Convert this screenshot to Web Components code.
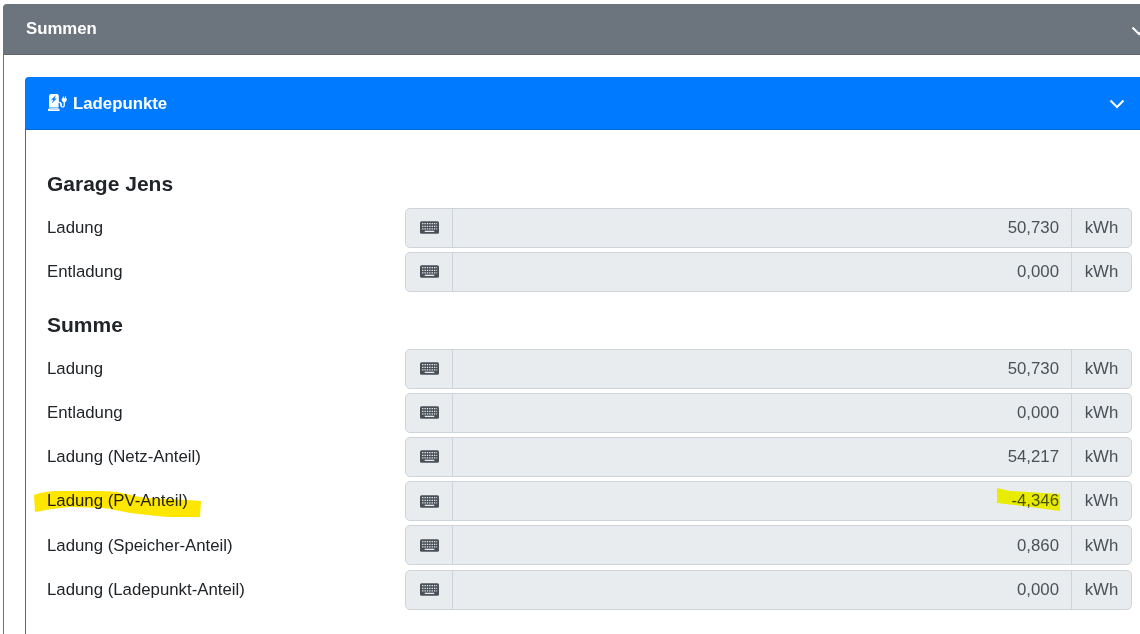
<!DOCTYPE html>
<html lang="de">
<head>
<meta charset="utf-8">
<title>Summen</title>
<style>
  html, body { margin: 0; height: 634px; overflow: hidden; background: #fff; }
  body { font: 16.8px/25.2px "Liberation Sans", Arial, sans-serif; color: #212529; position: relative; }
  .page { box-sizing: border-box; height: 634px; overflow: hidden; padding: 4px 0 0 3px; width: 1140px; }
  .outer { width: 1173px; }
  .first { --heading-top: 20px; }
</style>
</head>
<body>
<div class="page">
  <collapse-card class="outer" title="Summen" color="#6c757d" head="51" top="22" arrow-top="3">
    <collapse-card title="Ladepunkte" color="#007bff" head="53" top="21">
      <svg slot="icon" width="19" height="17" viewBox="0 0 576 512">
        <path fill="#fff" d="M40 400h272v60H40zM336 448H16c-8.800 0-16 7.200-16 16v32c0 8.800 7.200 16 16 16h320c8.800 0 16-7.200 16-16v-32c0-8.800-7.200-16-16-16zM544 128V80c0-8.800-7.200-16-16-16s-16 7.200-16 16v48h-32V80c0-8.800-7.200-16-16-16s-16 7.200-16 16v48h-16c-8.800 0-16 7.200-16 16v32c0 35.800 23.500 65.900 56 76.100V352c0 13.200-10.800 24-24 24s-24-10.800-24-24v-32c0-48.500-39.500-88-88-88h-8V64c0-35.300-28.700-64-64-64H96C60.700 0 32 28.700 32 64v352h288V264h8c22.100 0 40 17.900 40 40v27.800c0 37.800 27 72 64.600 75.900 43.100 4.300 79.400-29.500 79.400-71.700V252.100c32.500-10.200 56-40.300 56-76.100v-32c0-8.800-7.200-16-16-16z"/>
        <path fill="#007bff" d="M250 30 L90 170 h70 L110 290 L265 135 h-70 z"/>
      </svg>
      <group-title class="first">Garage Jens</group-title>
      <sum-row label="Ladung" value="50,730"></sum-row>
      <sum-row label="Entladung" value="0,000"></sum-row>
      <group-title>Summe</group-title>
      <sum-row label="Ladung" value="50,730"></sum-row>
      <sum-row label="Entladung" value="0,000"></sum-row>
      <sum-row label="Ladung (Netz-Anteil)" value="54,217"></sum-row>
      <sum-row label="Ladung (PV-Anteil)" value="-4,346"></sum-row>
      <sum-row label="Ladung (Speicher-Anteil)" value="0,860"></sum-row>
      <sum-row label="Ladung (Ladepunkt-Anteil)" value="0,000"></sum-row>
    </collapse-card>
  </collapse-card>
</div>
<marker-strokes></marker-strokes>

<script>
// Karte mit farbigem Kopf und Pfeil
class CollapseCard extends HTMLElement {
  connectedCallback() {
    const color = this.getAttribute("color") ?? "#6c757d";
    const head = Number(this.getAttribute("head") ?? 51);
    const top = this.getAttribute("top") ?? "21";
    const arrowTop = this.getAttribute("arrow-top") ?? "0";
    this.attachShadow({ mode: "open" }).innerHTML = `
      <style>
        :host { display: block; }
        .card { border: 1px solid ${color}; border-radius: 5px; background: #fff; }
        .head {
          box-sizing: border-box;
          height: ${head}px;
          margin: -1px -1px 0;
          padding: ${head - 51}px 37px 0 23px;
          display: flex;
          align-items: center;
          background: ${color};
          color: #fff;
          font-weight: 700;
          border-radius: 4px 4px 0 0;
          border-bottom: 1px solid rgba(0,0,0,.125);
        }
        ::slotted([slot="icon"]) { margin: 0 6px 4px 0; flex: none; }
        .title { flex: 1; }
        .arrow { flex: none; margin: ${arrowTop}px -8px 0 0; }
        .body { padding: ${top}px 21px 25px; display: flex; flex-direction: column; }
      </style>
      <div class="card">
        <div class="head">
          <slot name="icon"></slot>
          <span class="title">${this.getAttribute("title")}</span>
          <svg class="arrow" width="16" height="10" viewBox="0 0 16 10">
            <path d="M1.500 1.500 L8 8 L14.500 1.500" fill="none" stroke="#fff" stroke-width="2"/>
          </svg>
        </div>
        <div class="body"><slot></slot></div>
      </div>`;
  }
}

class GroupTitle extends HTMLElement {
  constructor() {
    super();
    this.attachShadow({ mode: "open" }).innerHTML = `
      <style>
        :host {
          display: block;
          font-size: 21px;
          line-height: 25.2px;
          font-weight: 700;
          margin: var(--heading-top, 16px) 0 11.4px;
        }
      </style>
      <slot></slot>`;
  }
}

// Zeile: Beschriftung + Eingabegruppe (nur lesen)
class SumRow extends HTMLElement {
  connectedCallback() {
    this.attachShadow({ mode: "open" }).innerHTML = `
      <style>
        :host { display: grid; grid-template-columns: 358px 727px; align-items: center; height: 40px; margin-bottom: 4.2px; }
        .label { padding-bottom: .3px; }
        .group {
          display: grid;
          grid-template-columns: 47px 1fr 60px;
          height: 40px;
          box-sizing: border-box;
          border: 1px solid #ced4da;
          border-radius: 5px;
          background: #e9ecef;
          color: #495057;
        }
        .group > * { display: flex; align-items: center; }
        .icon { justify-content: center; border-right: 1px solid #ced4da; }
        .value { justify-content: flex-end; padding: 0 12px .3px 0; }
        .unit { justify-content: center; padding-bottom: .3px; border-left: 1px solid #ced4da; }
      </style>
      <span class="label">${this.getAttribute("label")}</span>
      <div class="group">
        <div class="icon">
          <svg width="19" height="17" viewBox="0 0 576 512">
            <path fill="#495057" d="M48 64h480a48 48 0 0 1 48 48v288a48 48 0 0 1-48 48H48a48 48 0 0 1-48-48V112a48 48 0 0 1 48-48z"/>
            <path fill="#e9ecef" d="M64 120h40v40H64zM136 120h40v40h-40zM208 120h40v40h-40zM280 120h40v40h-40zM352 120h40v40h-40zM424 120h40v40h-40zM496 120h24v40h-24zM64 200h40v40H64zM136 200h40v40h-40zM208 200h40v40h-40zM280 200h40v40h-40zM352 200h40v40h-40zM424 200h40v40h-40zM496 200h24v40h-24zM64 280h40v40H64zM136 280h40v40h-40zM208 280h40v40h-40zM280 280h40v40h-40zM352 280h40v40h-40zM424 280h40v40h-40zM496 280h24v40h-24zM144 352h288v40H144z"/>
          </svg>
        </div>
        <div class="value">${this.getAttribute("value")}</div>
        <div class="unit">kWh</div>
      </div>`;
  }
}

// Gelbe Textmarker-Striche liegen ueber dem Screenshot
class MarkerStrokes extends HTMLElement {
  constructor() {
    super();
    this.attachShadow({ mode: "open" }).innerHTML = `
      <style>
        :host { position: absolute; left: 0; top: 0; width: 1140px; height: 634px; pointer-events: none; mix-blend-mode: multiply; }
        svg { display: block; }
      </style>
      <svg width="1140" height="634" viewBox="0 0 1140 634">
        <path fill="#ffe600" d="M34 495 C42 492 50 491 57 491 L90 491 C100 491 110 491 117 492 C128 494 138 497 147 498 L187 500 L201 501 L200 517 L167 517 C153 516 142 514 130 513 C120 511 112 509 103 508 L70 507 C58 508 46 510 35 512 Z"/>
        <path fill="#ffff00" d="M997 488 L1010 491 L1060 494 L1060 511 L1030 507 L997 503 Z"/>
      </svg>`;
  }
}

customElements.define("collapse-card", CollapseCard);
customElements.define("group-title", GroupTitle);
customElements.define("sum-row", SumRow);
customElements.define("marker-strokes", MarkerStrokes);
</script>
</body>
</html>
